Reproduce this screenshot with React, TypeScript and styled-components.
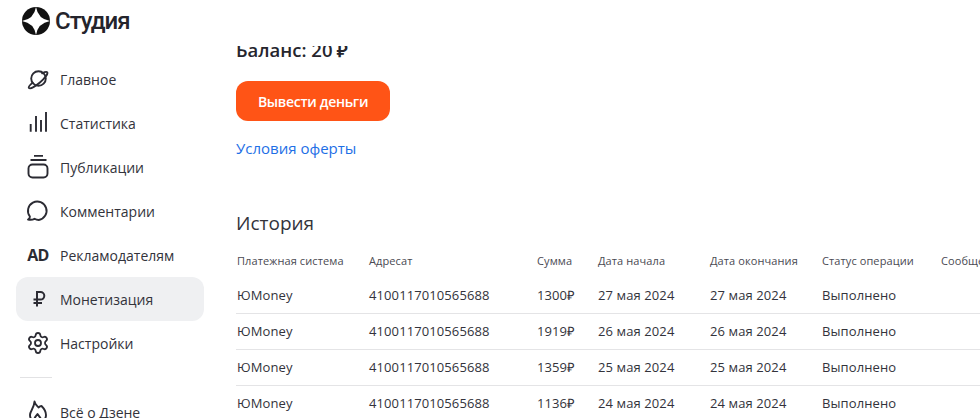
import React from 'react';
import styled, { createGlobalStyle } from 'styled-components';
import { Settings } from 'lucide-react';

const GlobalStyle = createGlobalStyle`
  html, body {
    margin: 0;
    padding: 0;
    height: 100%;
    background: #fff;
    overflow: hidden;
  }
  body {
    font-family: "Open Sans", "Liberation Sans", sans-serif;
    color: #2b2b33;
  }
`;

const Page = styled.div`
  display: flex;
  width: 980px;
  height: 418px;
  overflow: hidden;
`;

const Sidebar = styled.aside`
  flex: 0 0 220px;
  display: flex;
  flex-direction: column;
  padding: 0 16px;
  box-sizing: border-box;
`;

const LogoRow = styled.div`
  display: flex;
  flex: 0 0 42px;
  align-items: center;
  gap: 4px;
  padding-left: 5px;
  margin-bottom: 15px;
`;

const LogoText = styled.span`
  font-family: Roboto, sans-serif;
  font-size: 24px;
  font-weight: 500;
  letter-spacing: -1px;
  color: #24242c;
`;

const NavItem = styled.div<{ $active?: boolean }>`
  display: flex;
  flex: 0 0 44px;
  align-items: center;
  gap: 10px;
  padding-left: 10px;
  border-radius: 12px;
  background: ${({ $active }) => ($active ? '#eff0f2' : 'transparent')};
  font-size: 14px;
  color: #33333b;
`;

const IconSlot = styled.span`
  display: flex;
  align-items: center;
  justify-content: center;
  width: 24px;
  height: 24px;
  color: #2b2b33;
`;

const AdMark = styled.span`
  font-size: 16px;
  font-weight: 700;
  letter-spacing: -0.6px;
`;

const Divider = styled.hr`
  flex: 0 0 1px;
  width: 32px;
  height: 1px;
  margin: 12px 0 12px 4px;
  border: 0;
  background: #e2e2e4;
`;

const Main = styled.main`
  flex: 1;
  min-width: 0;
  margin-top: 46px;
  overflow: hidden;
`;

const Content = styled.div`
  margin-top: -8px;
  padding-left: 16px;
`;

const Balance = styled.div`
  font-size: 18.5px;
  font-weight: 600;
  line-height: 24px;
  color: #25252d;
`;

const WithdrawButton = styled.button`
  display: block;
  width: 154px;
  height: 40px;
  margin-top: 19px;
  border: 0;
  border-radius: 12px;
  background: #ff5416;
  color: #fff;
  font: 600 14px "Open Sans", sans-serif;
  letter-spacing: -0.3px;
`;

const OfferLink = styled.a`
  display: block;
  margin-top: 16px;
  font-size: 15px;
  line-height: 22px;
  color: #1e6fe6;
`;

const Heading = styled.h2`
  margin: 50px 0 0;
  font-size: 19px;
  font-weight: 400;
  line-height: 28px;
  color: #33333b;
`;

const Table = styled.table`
  width: 790px;
  margin-top: 6px;
  border-collapse: collapse;
  table-layout: fixed;
`;

const HeadCell = styled.th`
  height: 35px;
  padding: 0 0 0 1px;
  font-size: 11px;
  font-weight: 400;
  letter-spacing: 0.1px;
  text-align: left;
  white-space: nowrap;
  color: #4a4a52;
`;

const Cell = styled.td`
  height: 33px;
  padding: 0 0 2px 1px;
  font-size: 13px;
  letter-spacing: 0.1px;
  white-space: nowrap;
  color: #33333b;
`;

const Row = styled.tr`
  border-bottom: 1px solid #e4e4e6;

  &:last-child {
    border-bottom: 0;
  }
`;

const PlanetIcon = () => (
  <svg width="24" height="24" viewBox="0 0 24 24" fill="none" stroke="currentColor" strokeWidth="1.9">
    <circle cx="12.5" cy="11.5" r="7.3" />
    <path d="M6.6 15.6C3.9 18 2.2 20 2.9 20.9c1.1 1.3 6-1.2 11-5.4 5-4.3 8.3-8.8 7.3-10.2-.6-.8-2.5-.3-5 1" strokeLinecap="round" />
  </svg>
);

const StatsIcon = () => (
  <svg width="24" height="24" viewBox="0 0 24 24" fill="none" stroke="currentColor" strokeWidth="1.9">
    <path d="M4.7 20.7V13M10 20.7V5M15 20.7V9M20 20.7V1" />
  </svg>
);

const PublicationsIcon = () => (
  <svg width="24" height="24" viewBox="0 0 24 24" fill="none" stroke="currentColor" strokeWidth="1.9">
    <path d="M8 .8h9M4.500 5h16" />
    <rect x="2.500" y="9.500" width="19" height="13" rx="4" />
  </svg>
);

const CommentIcon = () => (
  <svg width="24" height="24" viewBox="0 0 24 24" fill="none" stroke="currentColor" strokeWidth="1.9" strokeLinejoin="round">
    <path d="M2 20.500c1.300-.6 2-1.800 1.900-3A9.300 9.300 0 1 1 12.800 21c-1.500 0-3-.4-4.300-1.200-1.800 1-4.300 1.200-6.500.7Z" />
  </svg>
);

const RubleIcon = () => (
  <svg width="24" height="24" viewBox="0 0 24 24" fill="none" stroke="currentColor" strokeWidth="2">
    <path d="M11 19.500V5h3.500a3.800 3.800 0 0 1 0 7.600H7.500M7.500 16h8.500" />
  </svg>
);

const FlameIcon = () => (
  <svg width="24" height="24" viewBox="0 0 24 24" fill="none" stroke="currentColor" strokeWidth="1.9" strokeLinejoin="round">
    <path d="M8.500 1.500c.5 3 2.500 4 4 6 1-1 2-1.500 3-1.500 2.500 2.500 4.500 5.500 4.500 9 0 4.500-3.500 7.500-8 7.500s-8-3-8-7.500c0-4 4-6.500 4.500-13.500Z" />
    <path d="M8 22c-1-3 1.500-5 3.500-8 1.500 2.500 4.500 4.500 4 8" />
  </svg>
);

const ZenLogo = () => (
  <svg width="30" height="30" viewBox="0 0 30 30">
    <circle cx="15" cy="15" r="14" fill="#111" />
    <path d="M15 1Q17 13 29 15 17 17 15 29 13 17 1 15 13 13 15 1Z" fill="#fff" />
  </svg>
);

const navItems = [
  { label: 'Главное', icon: <PlanetIcon /> },
  { label: 'Статистика', icon: <StatsIcon /> },
  { label: 'Публикации', icon: <PublicationsIcon /> },
  { label: 'Комментарии', icon: <CommentIcon /> },
  { label: 'Рекламодателям', icon: <AdMark>AD</AdMark> },
  { label: 'Монетизация', icon: <RubleIcon />, active: true },
  { label: 'Настройки', icon: <Settings size={24} strokeWidth={1.8} /> },
];

const columns = [132, 168, 61, 112, 112, 119, 86];

const headers = [
  'Платежная система',
  'Адресат',
  'Сумма',
  'Дата начала',
  'Дата окончания',
  'Статус операции',
  'Сообщение',
];

const payouts = [
  { sum: '1300₽', date: '27 мая 2024' },
  { sum: '1919₽', date: '26 мая 2024' },
  { sum: '1359₽', date: '25 мая 2024' },
  { sum: '1136₽', date: '24 мая 2024' },
];

export default function App() {
  return (
    <Page>
      <GlobalStyle />
      <Sidebar>
        <LogoRow>
          <ZenLogo />
          <LogoText>Студия</LogoText>
        </LogoRow>
        {navItems.map((item) => (
          <NavItem key={item.label} $active={item.active}>
            <IconSlot>{item.icon}</IconSlot>
            {item.label}
          </NavItem>
        ))}
        <Divider />
        <NavItem>
          <IconSlot>
            <FlameIcon />
          </IconSlot>
          Всё о Дзене
        </NavItem>
      </Sidebar>
      <Main>
        <Content>
          <Balance>Баланс: 20 ₽</Balance>
          <WithdrawButton>Вывести деньги</WithdrawButton>
          <OfferLink>Условия оферты</OfferLink>
          <Heading>История</Heading>
          <Table>
            <colgroup>
              {columns.map((width, i) => (
                <col key={i} style={{ width }} />
              ))}
            </colgroup>
            <thead>
              <tr>
                {headers.map((title) => (
                  <HeadCell key={title}>{title}</HeadCell>
                ))}
              </tr>
            </thead>
            <tbody>
              {payouts.map((row) => (
                <Row key={row.date}>
                  <Cell>ЮMoney</Cell>
                  <Cell>4100117010565688</Cell>
                  <Cell>{row.sum}</Cell>
                  <Cell>{row.date}</Cell>
                  <Cell>{row.date}</Cell>
                  <Cell>Выполнено</Cell>
                  <Cell />
                </Row>
              ))}
            </tbody>
          </Table>
        </Content>
      </Main>
    </Page>
  );
}
